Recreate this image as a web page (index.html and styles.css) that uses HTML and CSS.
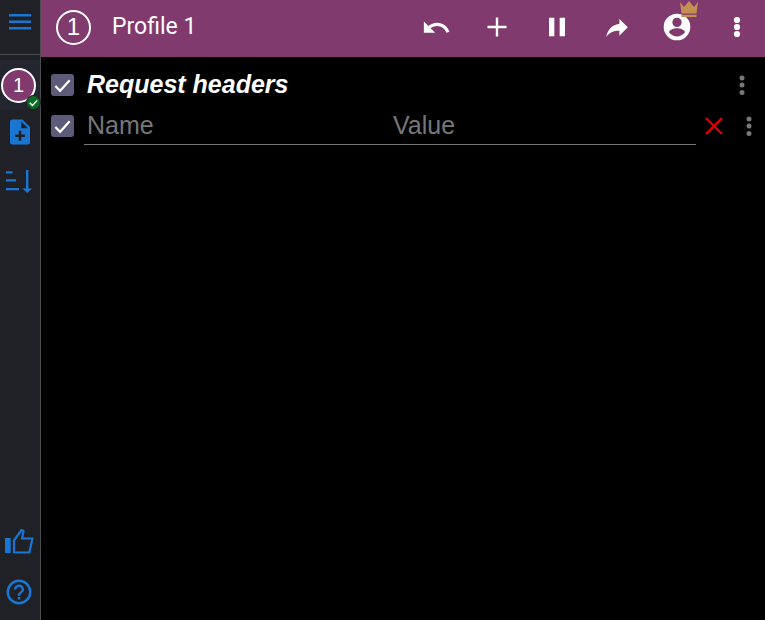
FILE: index.html
```html
<!DOCTYPE html>
<html lang="en">
<head>
<meta charset="utf-8">
<title>Profile 1</title>
<link rel="stylesheet" href="styles.css">
</head>
<body>
<div class="app">
  <aside class="sidebar">
    <div class="side-top">
      <svg class="ic-menu" viewBox="0 0 22 16" width="22" height="16"><path d="M0 0h22v2.400H0zM0 6.500h22v2.400H0zM0 13h22v2.400H0z"/></svg>
    </div>
    <div class="side-profile">
      <div class="side-badge">1</div>
      <svg class="side-check" viewBox="0 0 14 14" width="15" height="15"><circle cx="7" cy="7" r="6.5" fill="#0c6b24" stroke="#20212a"/><path d="M3.500 7.200l2.500 2.500 4.500-4.700" fill="none" stroke="#fff" stroke-width="1.300"/></svg>
    </div>
    <div class="side-item side-doc">
      <svg viewBox="0 0 24 24" width="30" height="30"><path class="blue" d="M6 2a2 2 0 0 0-2 2v16a2 2 0 0 0 2 2h12a2 2 0 0 0 2-2V8l-6-6zm7 1.500L18.500 9H13zM8 14h3v-3h2v3h3v2h-3v3h-2v-3H8z" fill-rule="evenodd"/></svg>
    </div>
    <div class="side-item side-sort">
      <svg viewBox="0 0 26 23" width="26" height="23"><path class="blue" d="M0 1.200h6.500v2.200H0zM0 9.300h10v2.200H0zM0 18h13v2.200H0zM20 0h2.400v18.500H26L21.200 23 16.300 18.500H20z"/></svg>
    </div>
    <div class="side-bottom">
      <svg class="thumb" viewBox="0 0 29 26" width="29" height="26"><path class="blue" d="M0 10h5.700v15H0z"/><path d="M9 24.500V12.500L16.500 2l2 1-1.500 7.500h10.500L24.300 24.500z" fill="none" stroke="#1976d2" stroke-width="2.200" stroke-linejoin="round"/></svg>
      <svg class="help" viewBox="0 0 24 24" width="30" height="30"><path class="blue" d="M11 18h2v-2h-2zm1-16a10 10 0 1 0 0 20 10 10 0 0 0 0-20zm0 18a8 8 0 1 1 0-16 8 8 0 0 1 0 16zm0-14a4 4 0 0 0-4 4h2a2 2 0 1 1 4 0c0 2-3 1.750-3 5h2c0-2.250 3-2.500 3-5a4 4 0 0 0-4-4z"/></svg>
    </div>
  </aside>
  <main class="main">
    <header class="topbar">
      <div class="top-badge">1</div>
      <div class="top-title">Profile 1</div>
      <div class="top-actions">
        <svg class="act" viewBox="-0.3 -1.450 25.600 25.600" width="32" height="32"><path d="M12.500 8c-2.650 0-5.050 1-6.900 2.600L2 7v9h9l-3.620-3.620c1.390-1.160 3.160-1.880 5.120-1.880 3.540 0 6.550 2.310 7.600 5.500l2.370-.78C21.080 11.030 17.150 8 12.500 8z"/></svg>
        <svg class="act" viewBox="0 0 32 32" width="32" height="32"><path d="M6.500 14.800h8.300V6.500h2.400v8.300h8.300v2.400h-8.300v8.300h-2.400v-8.300H6.500z"/></svg>
        <svg class="act" viewBox="0 0 24 24" width="32" height="32"><path d="M6 19h4V5H6zm8-14v14h4V5z"/></svg>
        <svg class="act" viewBox="-1.330 -1.630 26.670 26.670" width="32" height="32"><path d="M14 9V5l7 7-7 7v-4.100c-5 0-8.500 1.600-11 5.100 1-5 4-10 11-11z"/></svg>
        <div class="account">
          <svg class="act" viewBox="0 0 24 24" width="32" height="32"><path d="M12 2a10 10 0 1 0 0 20 10 10 0 0 0 0-20zm0 3a3.500 3.500 0 1 1 0 7 3.500 3.500 0 0 1 0-7zm0 14.200a7.700 7.700 0 0 1-6-3.200c0-2 4-3.100 6-3.100s6 1.100 6 3.100a7.700 7.700 0 0 1-6 3.200z"/></svg>
          <svg class="crown" viewBox="0 0 20 17" width="20" height="17"><path d="M1 2l4 5 5-6 5 6 4-5-1.500 11.500h-15zM2.500 14.700h15V17h-15z" fill="#c48f4f"/></svg>
        </div>
        <svg class="act" viewBox="0 0 32 32" width="32" height="32"><circle cx="16" cy="9" r="3.100"/><circle cx="16" cy="16" r="3.100"/><circle cx="16" cy="23" r="3.100"/></svg>
      </div>
    </header>
    <section class="content">
      <div class="row-title">
        <span class="check"><svg viewBox="0 0 24 24" width="23" height="23"><path d="M4.500 12.500l5 5 10-11" fill="none" stroke="#fff" stroke-width="2.400"/></svg></span>
        <div class="title">Request headers</div>
        <svg class="dots" viewBox="0 0 6 20" width="6" height="20"><circle cx="3" cy="3" r="2.500"/><circle cx="3" cy="10" r="2.500"/><circle cx="3" cy="17.500" r="2.500"/></svg>
      </div>
      <div class="row-header">
        <span class="check"><svg viewBox="0 0 24 24" width="23" height="23"><path d="M4.500 12.500l5 5 10-11" fill="none" stroke="#fff" stroke-width="2.400"/></svg></span>
        <div class="fields">
          <div class="field field-name">Name</div>
          <div class="field">Value</div>
        </div>
        <svg class="remove" viewBox="0 0 18 18" width="18" height="18"><path d="M1 1l16 16M17 1L1 17" stroke="#e00000" stroke-width="2.400"/></svg>
        <svg class="dots" viewBox="0 0 6 20" width="6" height="20"><circle cx="3" cy="3" r="2.500"/><circle cx="3" cy="10" r="2.500"/><circle cx="3" cy="17.500" r="2.500"/></svg>
      </div>
    </section>
  </main>
</div>
</body>
</html>
```
FILE: styles.css
```css
* { box-sizing: border-box; }
html, body { margin: 0; height: 100%; background: #000; }
body { font-family: "Liberation Sans", Arial, sans-serif; overflow: hidden; }
.app { display: flex; width: 765px; height: 620px; }
.blue { fill: #1976d2; }

.sidebar {
  width: 41px;
  flex: none;
  background: #202126;
  border-right: 1px solid #4b4c50;
  display: flex;
  flex-direction: column;
}
.side-top {
  height: 55px;
  flex: none;
  display: flex;
  align-items: flex-start;
  justify-content: center;
  padding-top: 14px;
  border-bottom: 1px solid #4b4c50;
}
.ic-menu { fill: #1976d2; margin-left: -1px; }
.side-profile {
  height: 50px;
  margin-top: 5px;
  flex: none;
  background: #23262e;
  position: relative;
  display: flex;
  align-items: center;
  padding-left: 1px;
}
.side-badge {
  width: 35px;
  height: 35px;
  border-radius: 50%;
  background: #803a6e;
  border: 2px solid #fff;
  color: #fff;
  font-size: 20px;
  display: flex;
  align-items: center;
  justify-content: center;
}
.side-check { position: absolute; left: 26px; top: 35px; }
.side-item {
  flex: none;
  display: flex;
  align-items: center;
  justify-content: center;
}
.side-doc { height: 44px; margin-left: -1px; }
.side-sort { height: 50px; justify-content: flex-start; padding: 4px 0 0 6px; }
.side-bottom {
  margin-top: auto;
  display: flex;
  flex-direction: column;
  align-items: center;
  gap: 23px;
  padding-bottom: 13px;
}
.thumb { margin-left: -1px; }
.help { margin-left: -2px; }

.main { flex: 1; min-width: 0; display: flex; flex-direction: column; }
.topbar {
  height: 57px;
  flex: none;
  background: #803a6e;
  display: flex;
  align-items: center;
  padding: 0 12px 3px 15px;
  color: #fff;
}
.top-badge {
  width: 35px;
  height: 35px;
  border-radius: 50%;
  border: 2px solid #fff;
  font-size: 24px;
  display: flex;
  align-items: center;
  justify-content: center;
}
.top-title { font-size: 23px; margin: 0 0 2px 21px; font-family: Roboto, sans-serif; }
.top-actions { margin-left: auto; display: flex; align-items: center; gap: 28px; }
.act { fill: #fff; display: block; }
.account { position: relative; }
.crown { position: absolute; left: 18px; top: -11px; }

.content { padding: 11px 11px 0 10px; }
.row-title, .row-header { display: flex; align-items: center; }
.row-title { height: 34px; }
.row-header { height: 40px; margin-top: 3px; }
.check {
  width: 23px;
  height: 22px;
  flex: none;
  border-radius: 3px;
  background: #5c5b7a;
  display: block;
  overflow: hidden;
}
.row-header .check { margin-top: 2px; }
.check svg { display: block; }
.title {
  margin: 0 0 2px 13px;
  font-size: 25px;
  font-weight: bold;
  font-style: italic;
  color: #fff;
}
.dots { fill: #77777a; flex: none; }
.row-title .dots { margin-left: auto; margin-right: 9px; }
.fields {
  margin-left: 10px;
  width: 612px;
  height: 38px;
  margin-top: 2px;
  border-bottom: 1px solid #77777a;
  display: flex;
  align-items: center;
  padding-left: 3px;
}
.field { font-size: 25px; color: #77777a; }
.field-name { width: 306px; }
.remove { margin: 2px 0 0 9px; }
.row-header .dots { margin: 2px 0 0 23px; }
```
